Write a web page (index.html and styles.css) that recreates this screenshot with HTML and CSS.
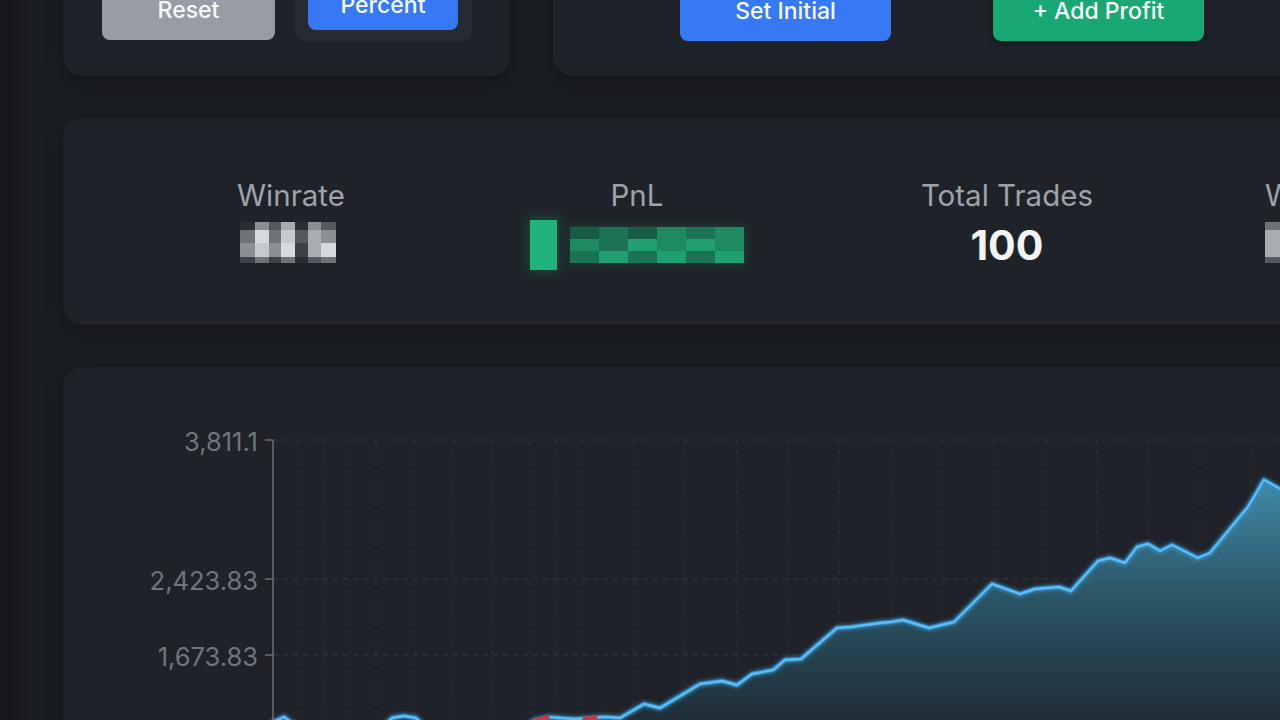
FILE: index.html
```html
<!DOCTYPE html>
<html lang="en">
<head>
<meta charset="utf-8">
<title>Trading Dashboard</title>
<link rel="stylesheet" href="styles.css">
</head>
<body>
<div class="page">
  <div class="top-row">
    <section class="card controls">
      <button class="btn btn-gray reset">Reset</button>
      <div class="toggle">
        <button class="btn btn-blue toggle-btn">Percent</button>
      </div>
    </section>
    <section class="card actions">
      <button class="btn btn-blue action">Set Initial</button>
      <button class="btn btn-green action">+ Add Profit</button>
    </section>
  </div>

  <section class="card stats">
    <div class="stat">
      <div class="stat-label">Winrate</div>
      <div class="stat-value">
        <div class="mosaic mosaic-gray">
          <i class="g0"></i><i class="g4"></i><i class="g2"></i><i class="g5"></i><i class="g0"></i><i class="g4"></i><i class="g2"></i>
          <i class="g3"></i><i class="g7"></i><i class="g3"></i><i class="g6"></i><i class="g2"></i><i class="g5"></i><i class="g4"></i>
          <i class="g4"></i><i class="g6"></i><i class="g4"></i><i class="g7"></i><i class="g1"></i><i class="g5"></i><i class="g7"></i>
          <i class="g1"></i><i class="g3"></i><i class="g1"></i><i class="g3"></i><i class="g0"></i><i class="g2"></i><i class="g3"></i>
        </div>
      </div>
    </div>
    <div class="stat stat-pnl">
      <div class="stat-label">PnL</div>
      <div class="stat-value">
        <div class="pnl">
          <span class="pnl-bar"></span>
          <div class="mosaic mosaic-green">
            <i class="n1"></i><i class="n2"></i><i class="n1"></i><i class="n3"></i><i class="n2"></i><i class="n3"></i>
            <i class="n3"></i><i class="n2"></i><i class="n4"></i><i class="n3"></i><i class="n4"></i><i class="n3"></i>
            <i class="n2"></i><i class="n4"></i><i class="n2"></i><i class="n4"></i><i class="n2"></i><i class="n4"></i>
          </div>
        </div>
      </div>
    </div>
    <div class="stat">
      <div class="stat-label">Total Trades</div>
      <div class="stat-value">100</div>
    </div>
    <div class="stat stat-last">
      <div class="stat-label">Win Streak</div>
      <div class="stat-value">
        <div class="mosaic mosaic-gray">
          <i class="g3"></i><i class="g5"></i><i class="g2"></i><i class="g5"></i><i class="g0"></i><i class="g4"></i><i class="g2"></i>
          <i class="g5"></i><i class="g7"></i><i class="g3"></i><i class="g6"></i><i class="g2"></i><i class="g5"></i><i class="g4"></i>
          <i class="g5"></i><i class="g6"></i><i class="g4"></i><i class="g7"></i><i class="g1"></i><i class="g5"></i><i class="g7"></i>
          <i class="g2"></i><i class="g3"></i><i class="g1"></i><i class="g3"></i><i class="g0"></i><i class="g2"></i><i class="g3"></i>
        </div>
      </div>
    </div>
  </section>

  <section class="card chart-card">
    <svg class="chart" width="1237" height="360" viewBox="63 367 1237 360" xmlns="http://www.w3.org/2000/svg">
      <defs>
        <linearGradient id="areaFill" gradientUnits="userSpaceOnUse" x1="0" y1="480" x2="0" y2="725">
          <stop offset="0" stop-color="#3f8aa6"/>
          <stop offset="0.45" stop-color="#2c586a"/>
          <stop offset="1" stop-color="#1f2b34"/>
        </linearGradient>
        <filter id="glow" x="-5%" y="-20%" width="110%" height="140%">
          <feGaussianBlur stdDeviation="1.6"/>
        </filter>
      </defs>
      <g class="grid-v">
        <line x1="298" y1="440" x2="298" y2="730"/>
        <line x1="324" y1="440" x2="324" y2="730"/>
        <line x1="350" y1="440" x2="350" y2="730"/>
        <line x1="376" y1="440" x2="376" y2="730"/>
        <line x1="414" y1="440" x2="414" y2="730"/>
        <line x1="453" y1="440" x2="453" y2="730"/>
        <line x1="492" y1="440" x2="492" y2="730"/>
        <line x1="530" y1="440" x2="530" y2="730"/>
        <line x1="557" y1="440" x2="557" y2="730"/>
        <line x1="582" y1="440" x2="582" y2="730"/>
        <line x1="634" y1="440" x2="634" y2="730"/>
        <line x1="685" y1="440" x2="685" y2="730"/>
        <line x1="737" y1="440" x2="737" y2="730"/>
        <line x1="788" y1="440" x2="788" y2="730"/>
        <line x1="839" y1="440" x2="839" y2="730"/>
        <line x1="891" y1="440" x2="891" y2="730"/>
        <line x1="942" y1="440" x2="942" y2="730"/>
        <line x1="994" y1="440" x2="994" y2="730"/>
        <line x1="1046" y1="440" x2="1046" y2="730"/>
        <line x1="1097" y1="440" x2="1097" y2="730"/>
        <line x1="1148" y1="440" x2="1148" y2="730"/>
        <line x1="1200" y1="440" x2="1200" y2="730"/>
        <line x1="1251" y1="440" x2="1251" y2="730"/>
      </g>
      <g class="grid-h">
        <line x1="273" y1="440" x2="1300" y2="440"/>
        <line x1="273" y1="579" x2="1300" y2="579"/>
        <line x1="273" y1="655" x2="1300" y2="655"/>
      </g>
      <path class="area" d="M273 722 L284 717 L296 726 L320 745 L350 760 L375 735 L392 718 L404 716 L416 718 L430 732 L470 750 L510 735 L535 720 L548 717 L560 718 L575 719 L590 718 L605 717 L620 718 L644 704 L660 708 L700 684 L722 681 L737 685 L752 674 L773 670 L785 660 L801 659 L837 628 L851 627 L880 623 L891 622 L903 620 L929 628 L954 622 L992 584 L1020 594 L1035 589 L1059 587 L1071 591 L1098 561 L1110 558 L1125 563 L1137 547 L1148 544 L1160 551 L1172 545 L1198 558 L1210 553 L1248 507 L1264 480 L1300 500 L1300 740 L273 740 Z"/>
      <path class="line-glow" filter="url(#glow)" d="M273 722 L284 717 L296 726 L320 745 L350 760 L375 735 L392 718 L404 716 L416 718 L430 732 L470 750 L510 735 L535 720 L548 717 L560 718 L575 719 L590 718 L605 717 L620 718 L644 704 L660 708 L700 684 L722 681 L737 685 L752 674 L773 670 L785 660 L801 659 L837 628 L851 627 L880 623 L891 622 L903 620 L929 628 L954 622 L992 584 L1020 594 L1035 589 L1059 587 L1071 591 L1098 561 L1110 558 L1125 563 L1137 547 L1148 544 L1160 551 L1172 545 L1198 558 L1210 553 L1248 507 L1264 480 L1300 500"/>
      <path class="line-edge" d="M273 722 L284 717 L296 726 L320 745 L350 760 L375 735 L392 718 L404 716 L416 718 L430 732 L470 750 L510 735 L535 720 L548 717 L560 718 L575 719 L590 718 L605 717 L620 718 L644 704 L660 708 L700 684 L722 681 L737 685 L752 674 L773 670 L785 660 L801 659 L837 628 L851 627 L880 623 L891 622 L903 620 L929 628 L954 622 L992 584 L1020 594 L1035 589 L1059 587 L1071 591 L1098 561 L1110 558 L1125 563 L1137 547 L1148 544 L1160 551 L1172 545 L1198 558 L1210 553 L1248 507 L1264 480 L1300 500"/>
      <path class="line" d="M273 722 L284 717 L296 726 L320 745 L350 760 L375 735 L392 718 L404 716 L416 718 L430 732 L470 750 L510 735 L535 720 L548 717 L560 718 L575 719 L590 718 L605 717 L620 718 L644 704 L660 708 L700 684 L722 681 L737 685 L752 674 L773 670 L785 660 L801 659 L837 628 L851 627 L880 623 L891 622 L903 620 L929 628 L954 622 L992 584 L1020 594 L1035 589 L1059 587 L1071 591 L1098 561 L1110 558 L1125 563 L1137 547 L1148 544 L1160 551 L1172 545 L1198 558 L1210 553 L1248 507 L1264 480 L1300 500"/>
      <path class="line-red" d="M535 720 L548 717"/>
      <path class="line-red" d="M584 718.5 L596 717.5"/>
      <g class="axis">
        <line x1="273" y1="440" x2="273" y2="740"/>
        <line x1="265" y1="440" x2="273" y2="440"/>
        <line x1="265" y1="579" x2="273" y2="579"/>
        <line x1="265" y1="655" x2="273" y2="655"/>
        <line x1="265" y1="730" x2="273" y2="730"/>
      </g>
      <text class="axis-label" x="258" y="441" text-anchor="end" dominant-baseline="central">3,811.1</text>
      <text class="axis-label" x="258" y="580" text-anchor="end" dominant-baseline="central">2,423.83</text>
      <text class="axis-label" x="258" y="656" text-anchor="end" dominant-baseline="central">1,673.83</text>
      <text class="axis-label" x="258" y="731" text-anchor="end" dominant-baseline="central">923.83</text>
    </svg>
  </section>
</div>
</body>
</html>
```

FILE: styles.css
```css
* {
  box-sizing: border-box;
  margin: 0;
  padding: 0;
}

html,
body {
  width: 1280px;
  height: 720px;
  overflow: hidden;
}

body {
  background: linear-gradient(90deg, #15171b 0, #15171b 12px, #1a1d22 30px, #1a1d22 100%);
  font-family: Inter, "Noto Sans", "Liberation Sans", sans-serif;
  color: #e5e7eb;
}

.page {
  width: 1420px;
  margin-top: -56px;
  padding-left: 63px;
  display: flex;
  flex-direction: column;
  gap: 42px;
}

.top-row {
  display: flex;
  gap: 43px;
  height: 132px;
}

.card {
  background: #1f2329;
  border-radius: 20px;
  box-shadow: 0 6px 18px rgba(0, 0, 0, 0.25);
}

.controls {
  width: 447px;
  display: flex;
  align-items: flex-end;
  gap: 20px;
  padding: 0 38px 34px 39px;
}

.btn {
  border: 0;
  color: #f7f8fa;
  font-family: inherit;
  font-size: 23px;
  font-weight: 500;
  border-radius: 8px;
  display: flex;
  align-items: center;
  justify-content: center;
}

.btn-gray {
  background: #989da5;
}

.reset {
  width: 173px;
  height: 60px;
  margin-bottom: 2px;
}

.toggle {
  background: #262a31;
  border-radius: 12px;
  padding: 12px 14px 12px 13px;
  width: 177px;
}

.toggle-btn {
  width: 150px;
  height: 50px;
}

.btn-blue {
  background: #3778f5;
}

.btn-green {
  background: #17a874;
  box-shadow: 0 3px 6px rgba(0, 0, 0, 0.35);
}

.actions {
  flex: 1;
  display: flex;
  align-items: flex-end;
  gap: 102px;
  padding: 0 0 35px 127px;
}

.action {
  width: 211px;
  height: 60px;
}

.stats {
  height: 207px;
  display: flex;
  gap: 177px;
  padding: 61px 0 0 174px;
}

.stat {
  display: flex;
  flex-direction: column;
  align-items: center;
  gap: 10px;
  flex-shrink: 0;
}

.stat-pnl {
  margin-left: 8px;
}

.stat-last {
  align-items: flex-start;
  margin-left: -5px;
}

.stat-label {
  font-size: 29.5px;
  line-height: 32px;
  color: #9ea3ab;
  white-space: nowrap;
}

.stat-value {
  height: 48px;
  display: flex;
  align-items: center;
  font-size: 41px;
  font-weight: 700;
  line-height: 48px;
  color: #f1f3f5;
}

.mosaic {
  display: grid;
  filter: blur(0.5px);
}

.mosaic-gray {
  grid-template-columns: 15px 14px 12px 14px 13px 13px 15px;
  grid-template-rows: 8px 13px 14px 6px;
  margin-bottom: 6px;
  margin-right: 6px;
}

.g0 { background: #2a2d33; }
.g1 { background: #3e4147; }
.g2 { background: #55585e; }
.g3 { background: #6f7277; }
.g4 { background: #8c8f95; }
.g5 { background: #a9acb1; }
.g6 { background: #c6c9ce; }
.g7 { background: #d6d9de; }

.pnl {
  display: flex;
  align-items: center;
  gap: 13px;
}

.pnl-bar {
  display: block;
  width: 27px;
  height: 50px;
  background: #21b27b;
  box-shadow: 0 0 10px 3px rgba(28, 150, 105, 0.3);
  filter: blur(0.5px);
}

.mosaic-green {
  grid-template-columns: repeat(6, 29px);
  grid-template-rows: repeat(3, 12px);
  box-shadow: 0 0 8px 2px rgba(28, 150, 105, 0.2);
}

.n1 { background: #175c44; }
.n2 { background: #1b7353; }
.n3 { background: #1e8a61; }
.n4 { background: #20a070; }
.n5 { background: #22b27b; }

.chart-card {
  height: 400px;
  overflow: hidden;
}

.chart {
  display: block;
}

.grid-v line {
  stroke: #2e3239;
  stroke-width: 1;
  stroke-dasharray: 5 5;
}

.grid-h line {
  stroke: #363b42;
  stroke-width: 1;
  stroke-dasharray: 5 5;
}

.area {
  fill: url(#areaFill);
}

.line-glow {
  fill: none;
  stroke: #3c9fd8;
  stroke-width: 7;
  stroke-linejoin: round;
  stroke-linecap: round;
  opacity: 0.45;
}

.line-edge {
  fill: none;
  stroke: #2f84bd;
  stroke-width: 4.5;
  stroke-linejoin: round;
  stroke-linecap: round;
}

.line {
  fill: none;
  stroke: #5dbcf0;
  stroke-width: 2.4;
  stroke-linejoin: round;
  stroke-linecap: round;
}

.line-red {
  fill: none;
  stroke: #c23a48;
  stroke-width: 3.5;
  stroke-linecap: round;
}

.axis line {
  stroke: #6a6f77;
  stroke-width: 1.5;
}

.axis-label {
  font-family: Inter, "Noto Sans", "Liberation Sans", sans-serif;
  font-size: 25.5px;
  fill: #70757d;
}
```
